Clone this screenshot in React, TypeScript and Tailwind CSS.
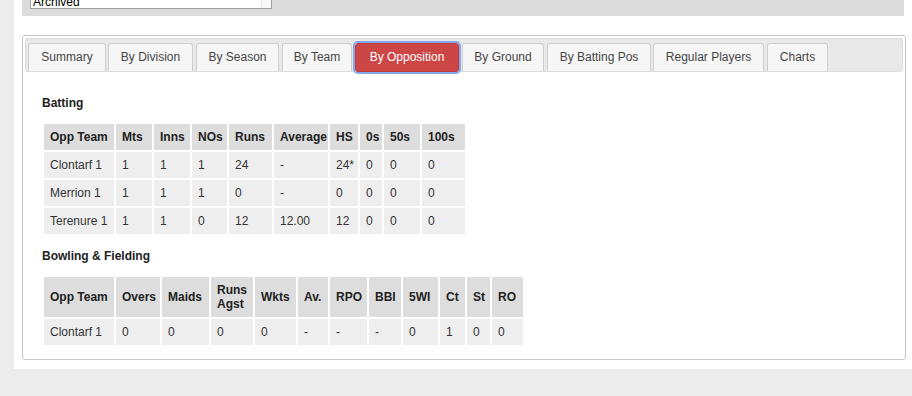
const tabs = [
  { label: "Summary", cls: "w-[78px] ml-0" },
  { label: "By Division", cls: "w-[85px] ml-[2px]" },
  { label: "By Season", cls: "w-[83px] ml-[3px]" },
  { label: "By Team", cls: "w-[70px] ml-[3px]" },
  { label: "By Opposition", cls: "w-[104px] ml-[3px]", active: true },
  { label: "By Ground", cls: "w-[82px] ml-[3px]" },
  { label: "By Batting Pos", cls: "w-[104px] ml-[3px]" },
  { label: "Regular Players", cls: "w-[111px] ml-[2px]" },
  { label: "Charts", cls: "w-[61px] ml-[3px]" },
];

const battingHead = [
  { t: "Opp Team", w: "w-[70px]" },
  { t: "Mts", w: "w-[36px]" },
  { t: "Inns", w: "w-[36px]" },
  { t: "NOs", w: "w-[35px]" },
  { t: "Runs", w: "w-[43px]" },
  { t: "Average", w: "w-[54px]" },
  { t: "HS", w: "w-[28px]" },
  { t: "0s", w: "w-[22px]" },
  { t: "50s", w: "w-[36px]" },
  { t: "100s", w: "w-[43px]" },
];

const battingRows = [
  ["Clontarf 1", "1", "1", "1", "24", "-", "24*", "0", "0", "0"],
  ["Merrion 1", "1", "1", "1", "0", "-", "0", "0", "0", "0"],
  ["Terenure 1", "1", "1", "0", "12", "12.00", "12", "0", "0", "0"],
];

const bowlingHead = [
  { t: "Opp Team", w: "w-[70px]" },
  { t: "Overs", w: "w-[44px]" },
  { t: "Maids", w: "w-[47px]" },
  { t: "Runs Agst", w: "w-[42px]" },
  { t: "Wkts", w: "w-[41px]" },
  { t: "Av.", w: "w-[30px]" },
  { t: "RPO", w: "w-[37px]" },
  { t: "BBI", w: "w-[32px]" },
  { t: "5WI", w: "w-[35px]" },
  { t: "Ct", w: "w-[25px]" },
  { t: "St", w: "w-[23px]" },
  { t: "RO", w: "w-[31px]" },
];

const bowlingRows = [["Clontarf 1", "0", "0", "0", "0", "-", "-", "-", "0", "1", "0", "0"]];

function StatsTable({ head, rows, width }: { head: { t: string; w: string }[]; rows: string[][]; width: string }) {
  return (
    <table className={`border-separate border-spacing-[2px] table-fixed ${width}`}>
      <thead>
        <tr>
          {head.map((h) => (
            <th key={h.t} className={`${h.w} bg-[#dddddd] pl-[6px] pr-[1px] py-[6px] text-left align-middle font-bold text-[#222] leading-[14px]`}>
              {h.t}
            </th>
          ))}
        </tr>
      </thead>
      <tbody>
        {rows.map((r, i) => (
          <tr key={i}>
            {r.map((c, j) => (
              <td key={j} className="bg-[#eeeeee] pl-[6px] pr-[1px] py-[6px] text-left align-middle text-[#333] leading-[14px] whitespace-nowrap">
                {c}
              </td>
            ))}
          </tr>
        ))}
      </tbody>
    </table>
  );
}

export default function App() {
  return (
    <div className="w-[912px] h-[396px] overflow-hidden bg-[#ececec] text-[12px] font-['Liberation_Sans',Arial,sans-serif]">
      <div className="ml-[14px] h-[369px] bg-white">
        {/* filter panel (scrolled off the top) */}
        <div className="ml-[8px] mr-[8px] h-[16px] bg-[#dcdcdc]">
          <div className="ml-[8px] w-[242px] h-[9px] flex border-x border-b border-[#a0a0a0] bg-white overflow-hidden">
            <div className="flex-1 pl-[2px] overflow-hidden">
              <span className="block -mt-[5px] leading-[14px] text-[12px] text-black">Archived</span>
            </div>
            <div className="w-[10px] border-l border-[#e2e2e2] bg-[#f8f8f8]"></div>
          </div>
        </div>

        {/* tabs widget */}
        <div className="mt-[19px] ml-[8px] mr-[6px] h-[325px] border border-[#c5c5c5] rounded-[3px] p-[2px]">
          <div className="flex items-end h-[34px] border border-[#dddddd] bg-[#e9e9e9] rounded-[3px] pt-[4px] px-[2px]">
            {tabs.map((t) =>
              t.active ? (
                <div
                  key={t.label}
                  className={`${t.cls} h-[29px] -mb-px pb-[2px] flex items-center justify-center rounded-[3px] border border-[#c23b3b] bg-[#cc4646] text-white outline-2 outline-[#80a8ee] outline-offset-0`}
                >
                  {t.label}
                </div>
              ) : (
                <div
                  key={t.label}
                  className={`${t.cls} h-[28px] pb-[2px] flex items-center justify-center rounded-t-[3px] border border-b-0 border-[#cfcfcf] bg-[#f6f6f6] text-[#454545]`}
                >
                  {t.label}
                </div>
              )
            )}
          </div>

          <div className="pl-[17px] pt-[24px]">
            <h3 className="font-bold text-[#222] leading-[14px]">Batting</h3>
            <div className="mt-[12px]">
              <StatsTable head={battingHead} rows={battingRows} width="w-[425px]" />
            </div>
            <h3 className="mt-[13px] font-bold text-[#222] leading-[14px]">Bowling &amp; Fielding</h3>
            <div className="mt-[12px]">
              <StatsTable head={bowlingHead} rows={bowlingRows} width="w-[483px]" />
            </div>
          </div>
        </div>
      </div>
    </div>
  );
}
